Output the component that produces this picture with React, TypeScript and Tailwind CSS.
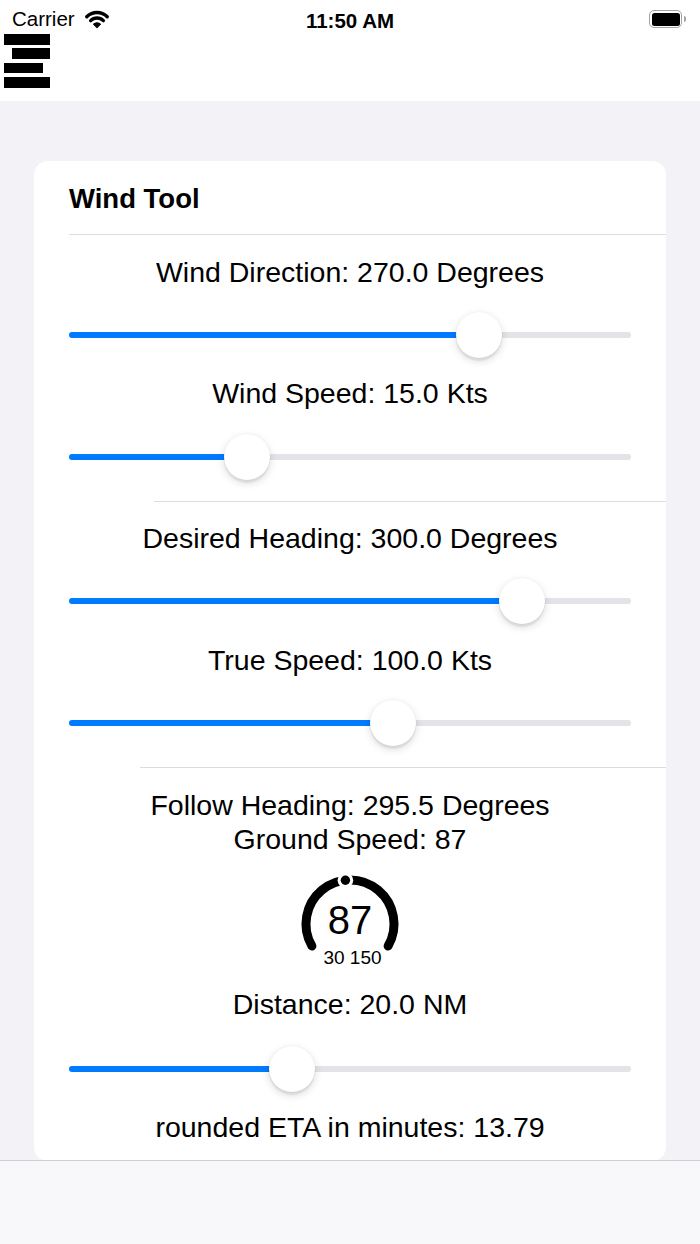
import React from 'react'

const font = { fontFamily: '"Liberation Sans", Arial, sans-serif' }

function Wifi() {
  return (
    <svg width="26" height="20" viewBox="0 0 26 20" className="ml-[9px]">
      <path d="M2.75 7.75 A14.5 14.5 0 0 1 23.25 7.75" fill="none" stroke="#000" strokeWidth="3.4" strokeLinecap="round" />
      <path d="M6.64 11.64 A9 9 0 0 1 19.36 11.64" fill="none" stroke="#000" strokeWidth="3.4" strokeLinecap="round" />
      <path d="M13 18.6 L9.6 15.2 A4.8 4.8 0 0 1 16.4 15.2 Z" fill="#000" stroke="#000" strokeWidth="1.2" strokeLinejoin="round" />
    </svg>
  )
}

function Battery() {
  return (
    <div className="flex items-center">
      <div className="w-[33px] h-[18px] rounded-[5px] border-[1.5px] border-[#a3a3a8] p-[1.5px]">
        <div className="w-full h-full rounded-[2.5px] bg-black" />
      </div>
      <div className="w-[2px] h-[6px] ml-[2px] rounded-r-[2px] bg-[#a3a3a8]" />
    </div>
  )
}

function Slider({ fraction }: { fraction: number }) {
  const center = 23 + fraction * 516
  return (
    <div className="relative h-[46px] flex items-center">
      <div className="relative w-full h-[6px] rounded-full bg-[#e3e3e8]">
        <div className="absolute left-0 top-0 h-full rounded-full bg-[#007aff]" style={{ width: center }} />
      </div>
      <div
        className="absolute top-0 w-[46px] h-[46px] rounded-full bg-white shadow-[0_3px_8px_rgba(0,0,0,0.15),0_3px_1px_rgba(0,0,0,0.06),0_0_0_0.5px_rgba(0,0,0,0.04)]"
        style={{ left: center - 23 }}
      />
    </div>
  )
}

function Label({ children, className = '' }: { children: React.ReactNode; className?: string }) {
  return <div className={`h-[34px] leading-[34px] text-center text-[28.5px] text-black whitespace-nowrap ${className}`}>{children}</div>
}

function Gauge() {
  return (
    <div className="relative w-[110px] h-[100px] mx-auto mt-[16px]">
      <svg width="110" height="100" viewBox="0 0 110 100">
        <path d="M16.9 74 A44 44 0 1 1 93.1 74" fill="none" stroke="#000" strokeWidth="9" strokeLinecap="round" />
        <circle cx="50.4" cy="8.2" r="7.8" fill="#fff" />
        <circle cx="50.4" cy="8.2" r="4.7" fill="#000" />
      </svg>
      <div className="absolute inset-x-0 top-[28px] h-[40px] leading-[40px] text-center text-[40px] text-black">87</div>
      <div className="absolute inset-x-0 top-[76px] h-[20px] leading-[20px] pl-[5px] text-center text-[19px] font-medium text-black">30 150</div>
    </div>
  )
}

export default function App() {
  return (
    <div className="w-[700px] h-[1244px] flex flex-col bg-white overflow-hidden" style={font}>
      {/* Status bar + nav */}
      <header className="h-[101px] bg-white shrink-0">
        <div className="h-[34px] pt-[4px] flex items-center px-[12px] relative">
          <span className="text-[20.5px] text-black">Carrier</span>
          <Wifi />
          <span className="absolute left-0 right-0 text-center text-[20.5px] font-bold text-black pt-[4px]">11:50 AM</span>
          <div className="ml-auto mr-[2px]">
            <Battery />
          </div>
        </div>
        <div className="pl-[4px]">
          <div className="w-[46px] h-[11px] bg-black" />
          <div className="w-[38px] h-[11px] ml-[8px] mt-[3px] bg-black" />
          <div className="w-[39px] h-[10px] mt-[4px] bg-black" />
          <div className="w-[46px] h-[11px] mt-[4px] bg-black" />
        </div>
      </header>

      <main className="flex-1 overflow-hidden bg-[#f2f2f7] px-[34px] pt-[60px]">
        <div className="bg-white rounded-[14px]">
          <div className="h-[73px] flex items-center pl-[35px] pt-[2px] text-[27.5px] font-bold text-black">Wind Tool</div>
          <div className="h-px ml-[35px] bg-[#dcdce0]" />

          <section className="pt-[20px] px-[35px]">
            <Label>Wind Direction: 270.0 Degrees</Label>
            <div className="mt-[23px]">
              <Slider fraction={0.75} />
            </div>
            <Label className="mt-[18px]">Wind Speed: 15.0 Kts</Label>
            <div className="mt-[24px]">
              <Slider fraction={0.3} />
            </div>
          </section>
          <div className="h-px mt-[21px] ml-[120px] bg-[#dcdce0]" />

          <section className="pt-[19px] px-[35px]">
            <Label>Desired Heading: 300.0 Degrees</Label>
            <div className="mt-[23px]">
              <Slider fraction={300 / 360} />
            </div>
            <Label className="mt-[19px]">True Speed: 100.0 Kts</Label>
            <div className="mt-[23px]">
              <Slider fraction={70 / 120} />
            </div>
          </section>
          <div className="h-px mt-[21px] ml-[106px] bg-[#dcdce0]" />

          <section className="pt-[20px] pb-[17px] px-[35px]">
            <Label>Follow Heading: 295.5 Degrees</Label>
            <Label>Ground Speed: 87</Label>
            <Gauge />
            <Label className="mt-[15px]">Distance: 20.0 NM</Label>
            <div className="mt-[25px]">
              <Slider fraction={19 / 49} />
            </div>
            <Label className="mt-[18px]">rounded ETA in minutes: 13.79</Label>
          </section>
        </div>
      </main>

      <footer className="h-[84px] shrink-0 border-t border-[#cfcfd3] bg-[#f8f8fa]" />
    </div>
  )
}
